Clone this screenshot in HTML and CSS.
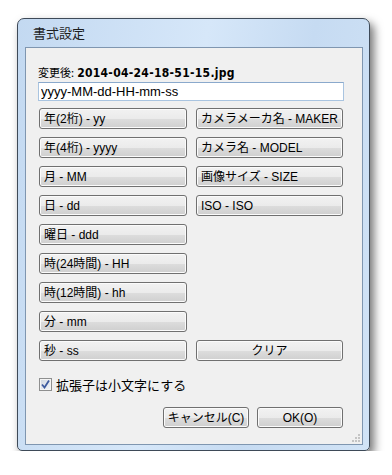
FILE: index.html
```html
<!DOCTYPE html>
<html>
<head>
  <meta charset="UTF-8">
  <title>書式設定</title>
  <link rel="stylesheet" href="styles.css">
</head>
<body>
  <div class="window">
    <div class="titlebar">書式設定</div>

    <div class="client">
      <div class="preview">
        <span>変更後:</span> <b>2014-04-24-18-51-15.jpg</b>
      </div>
      <input type="text" class="format" value="yyyy-MM-dd-HH-mm-ss">

      <div class="grid">
        <button class="btn">年(2桁) - yy</button>
        <button class="btn">カメラメーカ名 - MAKER</button>
        <button class="btn">年(4桁) - yyyy</button>
        <button class="btn">カメラ名 - MODEL</button>
        <button class="btn">月 - MM</button>
        <button class="btn">画像サイズ - SIZE</button>
        <button class="btn">日 - dd</button>
        <button class="btn">ISO - ISO</button>
        <button class="btn">曜日 - ddd</button>
        <div></div>
        <button class="btn">時(24時間) - HH</button>
        <div></div>
        <button class="btn">時(12時間) - hh</button>
        <div></div>
        <button class="btn">分 - mm</button>
        <div></div>
        <button class="btn">秒 - ss</button>
        <button class="btn center">クリア</button>
      </div>

      <label class="check">
        <span class="box">
          <svg width="9" height="9" viewBox="0 0 9 9">
            <path d="M1 4.5 L3.5 7.5 L8 0.5" fill="none" stroke="#3d5a9e" stroke-width="1.8"/>
          </svg>
        </span>
        拡張子は小文字にする
      </label>

      <div class="actions">
        <button class="btn center wide">キャンセル(C)</button>
        <button class="btn center wide">OK(O)</button>
      </div>

      <div class="grip">
        <svg width="10" height="10" viewBox="0 0 10 10">
          <rect x="7" y="1" width="2" height="2" fill="#c4c4c4"/>
          <rect x="4" y="4" width="2" height="2" fill="#c4c4c4"/>
          <rect x="7" y="4" width="2" height="2" fill="#c4c4c4"/>
          <rect x="1" y="7" width="2" height="2" fill="#c4c4c4"/>
          <rect x="4" y="7" width="2" height="2" fill="#c4c4c4"/>
          <rect x="7" y="7" width="2" height="2" fill="#c4c4c4"/>
        </svg>
      </div>
    </div>
  </div>
</body>
</html>
```

FILE: styles.css
```css
body {
  margin: 0;
  padding: 18px 0 0 17px;
  background-color: #fff;
  font-family: "Liberation Sans", "Noto Sans CJK JP", sans-serif;
  font-size: 12px;
  color: #000;
}

.window {
  box-sizing: border-box;
  width: 353px;
  height: 433px;
  padding: 0 6px 5px 7px;
  border: 1px solid #3e4a58;
  border-radius: 7px 7px 5px 5px;
  background: linear-gradient(100deg, #c3d9f1 0%, #d6e7f9 45%, #c6dbf2 70%, #d1e3f6 100%);
  box-shadow: 4px 5px 10px rgba(0, 0, 0, 0.55);
  display: flex;
  flex-direction: column;
}

.titlebar {
  height: 28px;
  line-height: 27px;
  padding-left: 8px;
  font-family: "Noto Sans CJK JP", sans-serif;
  font-size: 13px;
  color: #1e1e1e;
}

.client {
  position: relative;
  flex: 1;
  box-sizing: border-box;
  padding: 16px 0 0 12px;
  border: 1px solid #7f96b0;
  background-color: #f0f0f0;
}

.preview {
  height: 16px;
  line-height: 16px;
  font-size: 11px;
}

.preview span {
  font-family: "Noto Sans CJK JP", sans-serif;
}

.preview b {
  font-size: 12px;
  letter-spacing: 0.3px;
  font-family: "DejaVu Sans Condensed", sans-serif;
}

.format {
  box-sizing: border-box;
  display: block;
  width: 306px;
  height: 19px;
  margin-top: 2px;
  padding: 0 2px;
  border: 1px solid #a9c4e0;
  border-top-color: #8aa9cc;
  background-color: #fff;
  font-family: "Liberation Sans", "Noto Sans CJK JP", sans-serif;
  font-size: 13px;
  outline: none;
}

.grid {
  display: grid;
  grid-template-columns: 148px 147px;
  grid-auto-rows: 21px;
  column-gap: 9px;
  row-gap: 8px;
  margin: 7px 0 0 1px;
}

.btn {
  box-sizing: border-box;
  height: 21px;
  padding: 0 0 0 4px;
  border: 1px solid #707070;
  border-radius: 3px;
  background: linear-gradient(#f2f2f2 0%, #ebebeb 50%, #dddddd 51%, #cfcfcf 100%);
  box-shadow: inset 0 0 0 1px #fbfbfb;
  font-family: "Liberation Sans", "Noto Sans CJK JP", sans-serif;
  font-size: 12px;
  line-height: 18px;
  color: #000;
  text-align: left;
}

.btn.center {
  padding: 0;
  text-align: center;
}

.btn.wide {
  width: 86px;
}

.check {
  display: flex;
  align-items: center;
  gap: 4px;
  margin: 17px 0 0 1px;
  height: 13px;
  font-family: "Noto Sans CJK JP", sans-serif;
  font-size: 13px;
}

.box {
  box-sizing: border-box;
  width: 13px;
  height: 13px;
  border: 1px solid #8e8f8f;
  background: linear-gradient(135deg, #cfd6e0, #f4f6f9);
  box-shadow: inset 0 0 0 1px #f4f4f4;
  display: flex;
  align-items: center;
  justify-content: center;
}

.actions {
  display: flex;
  justify-content: flex-end;
  gap: 8px;
  width: 305px;
  margin-top: 16px;
}

.grip {
  position: absolute;
  right: 1px;
  bottom: 1px;
  line-height: 0;
}
```
